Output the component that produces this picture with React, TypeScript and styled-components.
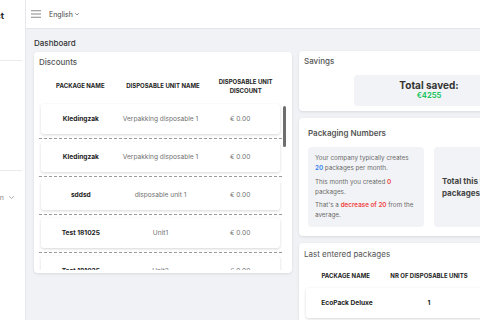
import React from "react";
import styled, { createGlobalStyle } from "styled-components";

const Global = createGlobalStyle`
  html, body { margin: 0; padding: 0; }
  body {
    font-family: Inter, "Noto Sans", "Liberation Sans", sans-serif;
    background: #f1f2f6;
    color: #333;
  }
  * { box-sizing: border-box; }
`;

const Page = styled.div`
  display: flex;
  width: 480px;
  height: 320px;
  overflow: hidden;
  background: #f1f2f6;
`;

const Sidebar = styled.aside`
  flex: 0 0 26px;
  width: 26px;
  background: #fff;
  border-right: 1px solid #e6e7ec;
  display: flex;
  flex-direction: column;
  overflow: hidden;
`;

const Brand = styled.div`
  height: 30px;
  display: flex;
  align-items: center;
  justify-content: flex-end;
  padding-right: 21px;
  font-weight: 700;
  font-size: 9px;
  color: #222;
  white-space: nowrap;
`;

const SideDivider = styled.div<{ $top: number }>`
  height: 1px;
  margin-top: ${(p) => p.$top}px;
  margin-right: 3px;
  background: #ebebef;
  flex: 0 0 1px;
`;

const NavItem = styled.div`
  margin-top: 20px;
  height: 12px;
  display: flex;
  align-items: center;
  justify-content: flex-end;
  gap: 5px;
  padding-right: 11px;
  font-size: 7px;
  color: #888;
  white-space: nowrap;
  & > * { flex-shrink: 0; }
`;

const Main = styled.div`
  flex: 1;
  display: flex;
  flex-direction: column;
  min-width: 0;
`;

const TopBar = styled.header`
  height: 29px;
  flex: 0 0 29px;
  background: #fff;
  border-bottom: 1px solid #e4e5ea;
  display: flex;
  align-items: center;
  padding-left: 5px;
  gap: 8px;
`;

const Lang = styled.div`
  display: flex;
  align-items: center;
  gap: 2px;
  font-size: 7px;
  color: #444;
  margin-top: 1px;
`;

const Content = styled.main`
  padding: 8px 0 0 8px;
  display: flex;
  flex-direction: column;
`;

const PageTitle = styled.h1`
  margin: 0 0 3px;
  font-size: 8px;
  line-height: 12px;
  font-weight: 500;
  color: #333;
`;

const Grid = styled.div`
  display: grid;
  grid-template-columns: 258px 260px;
  column-gap: 7px;
  align-items: start;
`;

const Card = styled.section<{ $pad?: string; $height?: number }>`
  background: #fff;
  border-radius: 4px;
  box-shadow: 0 1px 3px rgba(0, 0, 0, 0.1);
  padding: ${(p) => p.$pad ?? "5px"};
  ${(p) => (p.$height ? `height: ${p.$height}px;` : "")}
  display: flex;
  flex-direction: column;
`;

const CardTitle = styled.h2<{ $weight?: number; $lh?: number }>`
  margin: 0;
  font-size: 8px;
  line-height: ${(p) => p.$lh ?? 11}px;
  font-weight: ${(p) => p.$weight ?? 500};
  color: #555;
  white-space: nowrap;
`;

const TableHead = styled.div<{ $height: number; $cols: number; $width?: number; $pt?: number }>`
  display: grid;
  grid-template-columns: repeat(${(p) => p.$cols}, 1fr);
  ${(p) => (p.$width ? `width: ${p.$width}px;` : "")}
  height: ${(p) => p.$height}px;
  padding-top: ${(p) => p.$pt ?? 0}px;
  align-items: center;
  flex: 0 0 auto;
`;

const HeadCell = styled.div`
  text-align: center;
  font-size: 6px;
  line-height: 9px;
  font-weight: 700;
  text-transform: uppercase;
  color: #222;
  white-space: pre-line;
`;

const ScrollArea = styled.div`
  position: relative;
  height: 167px;
`;

const ScrollList = styled.div`
  height: 100%;
  overflow: hidden;
  padding-right: 5px;
`;

const ScrollThumb = styled.div`
  position: absolute;
  right: 1px;
  top: 3px;
  width: 3px;
  height: 41px;
  border-radius: 2px;
  background: #6e6e6e;
`;

const RowCard = styled.div<{ $cols: number; $width?: number }>`
  display: grid;
  grid-template-columns: repeat(${(p) => p.$cols}, 1fr);
  ${(p) => (p.$width ? `width: ${p.$width}px;` : "")}
  align-items: center;
  height: 30px;
  margin: 1px 2px 0;
  background: #fff;
  border-radius: 3px;
  box-shadow: 0 1px 3px rgba(0, 0, 0, 0.16);
`;

const Separator = styled.div`
  margin: 4px 0 3px;
  border-top: 1px dashed #9a9a9a;
`;

const Cell = styled.div<{ $strong?: boolean }>`
  text-align: center;
  font-size: 6.6px;
  font-weight: ${(p) => (p.$strong ? 700 : 400)};
  color: ${(p) => (p.$strong ? "#222" : "#707070")};
  white-space: nowrap;
`;

const Column = styled.div`
  display: flex;
  flex-direction: column;
  gap: 7px;
  margin-top: -1px;
`;

const SavedBox = styled.div`
  width: 150px;
  margin: 8px auto 0;
  background: #f2f3f6;
  border-radius: 4px;
  padding: 4px 0 5px;
  display: flex;
  flex-direction: column;
  align-items: center;
`;

const SavedLabel = styled.div`
  font-size: 10px;
  line-height: 12px;
  font-weight: 700;
  color: #333;
`;

const SavedValue = styled.div`
  font-size: 7.5px;
  line-height: 10px;
  font-weight: 700;
  color: #22c55e;
`;

const StatRow = styled.div`
  display: grid;
  grid-template-columns: 116px 116px;
  column-gap: 10px;
  margin-top: 8px;
`;

const StatBox = styled.div<{ $center?: boolean }>`
  height: 80px;
  background: #f2f3f6;
  border-radius: 4px;
  padding: ${(p) => (p.$center ? "0 8px" : "6px 7px 6px 7px")};
  display: flex;
  flex-direction: column;
  justify-content: ${(p) => (p.$center ? "center" : "flex-start")};
`;

const Para = styled.p`
  margin: 0 0 3.5px;
  font-size: 6.3px;
  line-height: 10px;
  color: #6b6b6b;
`;

const Hl = styled.span<{ $tone: "blue" | "red" }>`
  font-weight: 600;
  color: ${(p) => (p.$tone === "blue" ? "#2f80ed" : "#ef4444")};
`;

const BigLine = styled.div`
  font-size: 8px;
  line-height: 12px;
  font-weight: 700;
  color: #454545;
  white-space: nowrap;
`;

const Chevron = ({ size = 5, color = "#666" }: { size?: number; color?: string }) => (
  <svg width={size} height={size * 0.6} viewBox="0 0 10 6" fill="none">
    <path d="M1 1l4 4 4-4" stroke={color} strokeWidth="1.6" strokeLinecap="round" strokeLinejoin="round" />
  </svg>
);

const Burger = () => (
  <svg width="10" height="8" viewBox="0 0 10 8" fill="none">
    <path d="M0 0.75h10M0 4h10M0 7.25h10" stroke="#8a8a8a" strokeWidth="1.1" />
  </svg>
);

const discounts = [
  ["Kledingzak", "Verpakking disposable 1", "€ 0.00"],
  ["Kledingzak", "Verpakking disposable 1", "€ 0.00"],
  ["sddsd", "disposable unit 1", "€ 0.00"],
  ["Test 181025", "Unit1", "€ 0.00"],
  ["Test 181025", "Unit2", "€ 0.00"],
  ["Test 181025", "Unit3", "€ 0.00"],
  ["EcoPack Deluxe", "Unit1", "€ 0.00"],
];

export default function App() {
  return (
    <>
      <Global />
      <Page>
        <Sidebar>
          <Brand>Packagepact</Brand>
          <SideDivider $top={30} />
          <SideDivider $top={109} />
          <NavItem>
            <span>Admin</span>
            <Chevron size={5} color="#999" />
          </NavItem>
        </Sidebar>
        <Main>
          <TopBar>
            <Burger />
            <Lang>
              English <Chevron size={4} color="#555" />
            </Lang>
          </TopBar>
          <Content>
            <PageTitle>Dashboard</PageTitle>
            <Grid>
              <Card $pad="5px 5px 3px" $height={221}>
                <CardTitle>Discounts</CardTitle>
                <TableHead $cols={3} $height={35}>
                  <HeadCell>Package name</HeadCell>
                  <HeadCell>Disposable unit name</HeadCell>
                  <HeadCell>{"Disposable unit\ndiscount"}</HeadCell>
                </TableHead>
                <ScrollArea>
                  <ScrollList>
                    {discounts.map((d, i) => (
                      <React.Fragment key={i}>
                        <RowCard $cols={3}>
                          <Cell $strong>{d[0]}</Cell>
                          <Cell>{d[1]}</Cell>
                          <Cell>{d[2]}</Cell>
                        </RowCard>
                        <Separator />
                      </React.Fragment>
                    ))}
                  </ScrollList>
                  <ScrollThumb />
                </ScrollArea>
              </Card>
              <Column>
                <Card $height={60}>
                  <CardTitle>Savings</CardTitle>
                  <SavedBox>
                    <SavedLabel>Total saved:</SavedLabel>
                    <SavedValue>€4255</SavedValue>
                  </SavedBox>
                </Card>
                <Card $pad="9px" $height={118}>
                  <CardTitle $weight={600} $lh={12}>
                    Packaging Numbers
                  </CardTitle>
                  <StatRow>
                    <StatBox>
                      <Para>
                        Your company typically creates <Hl $tone="blue">20</Hl> packages per month.
                      </Para>
                      <Para>
                        This month you created <Hl $tone="red">0</Hl> packages.
                      </Para>
                      <Para>
                        That's a <Hl $tone="red">decrease of 20</Hl> from the average.
                      </Para>
                    </StatBox>
                    <StatBox $center>
                      <BigLine>Total this year: 0</BigLine>
                      <BigLine>packages</BigLine>
                    </StatBox>
                  </StatRow>
                </Card>
                <Card $pad="6px 5px 5px">
                  <CardTitle $weight={400}>Last entered packages</CardTitle>
                  <TableHead $cols={3} $height={27} $pt={4} $width={250}>
                    <HeadCell>Package name</HeadCell>
                    <HeadCell>Nr of disposable units</HeadCell>
                    <HeadCell>Date</HeadCell>
                  </TableHead>
                  <RowCard $cols={3} $width={246}>
                    <Cell $strong>EcoPack Deluxe</Cell>
                    <Cell $strong>1</Cell>
                    <Cell>18-10-2025</Cell>
                  </RowCard>
                  <Separator />
                </Card>
              </Column>
            </Grid>
          </Content>
        </Main>
      </Page>
    </>
  );
}
